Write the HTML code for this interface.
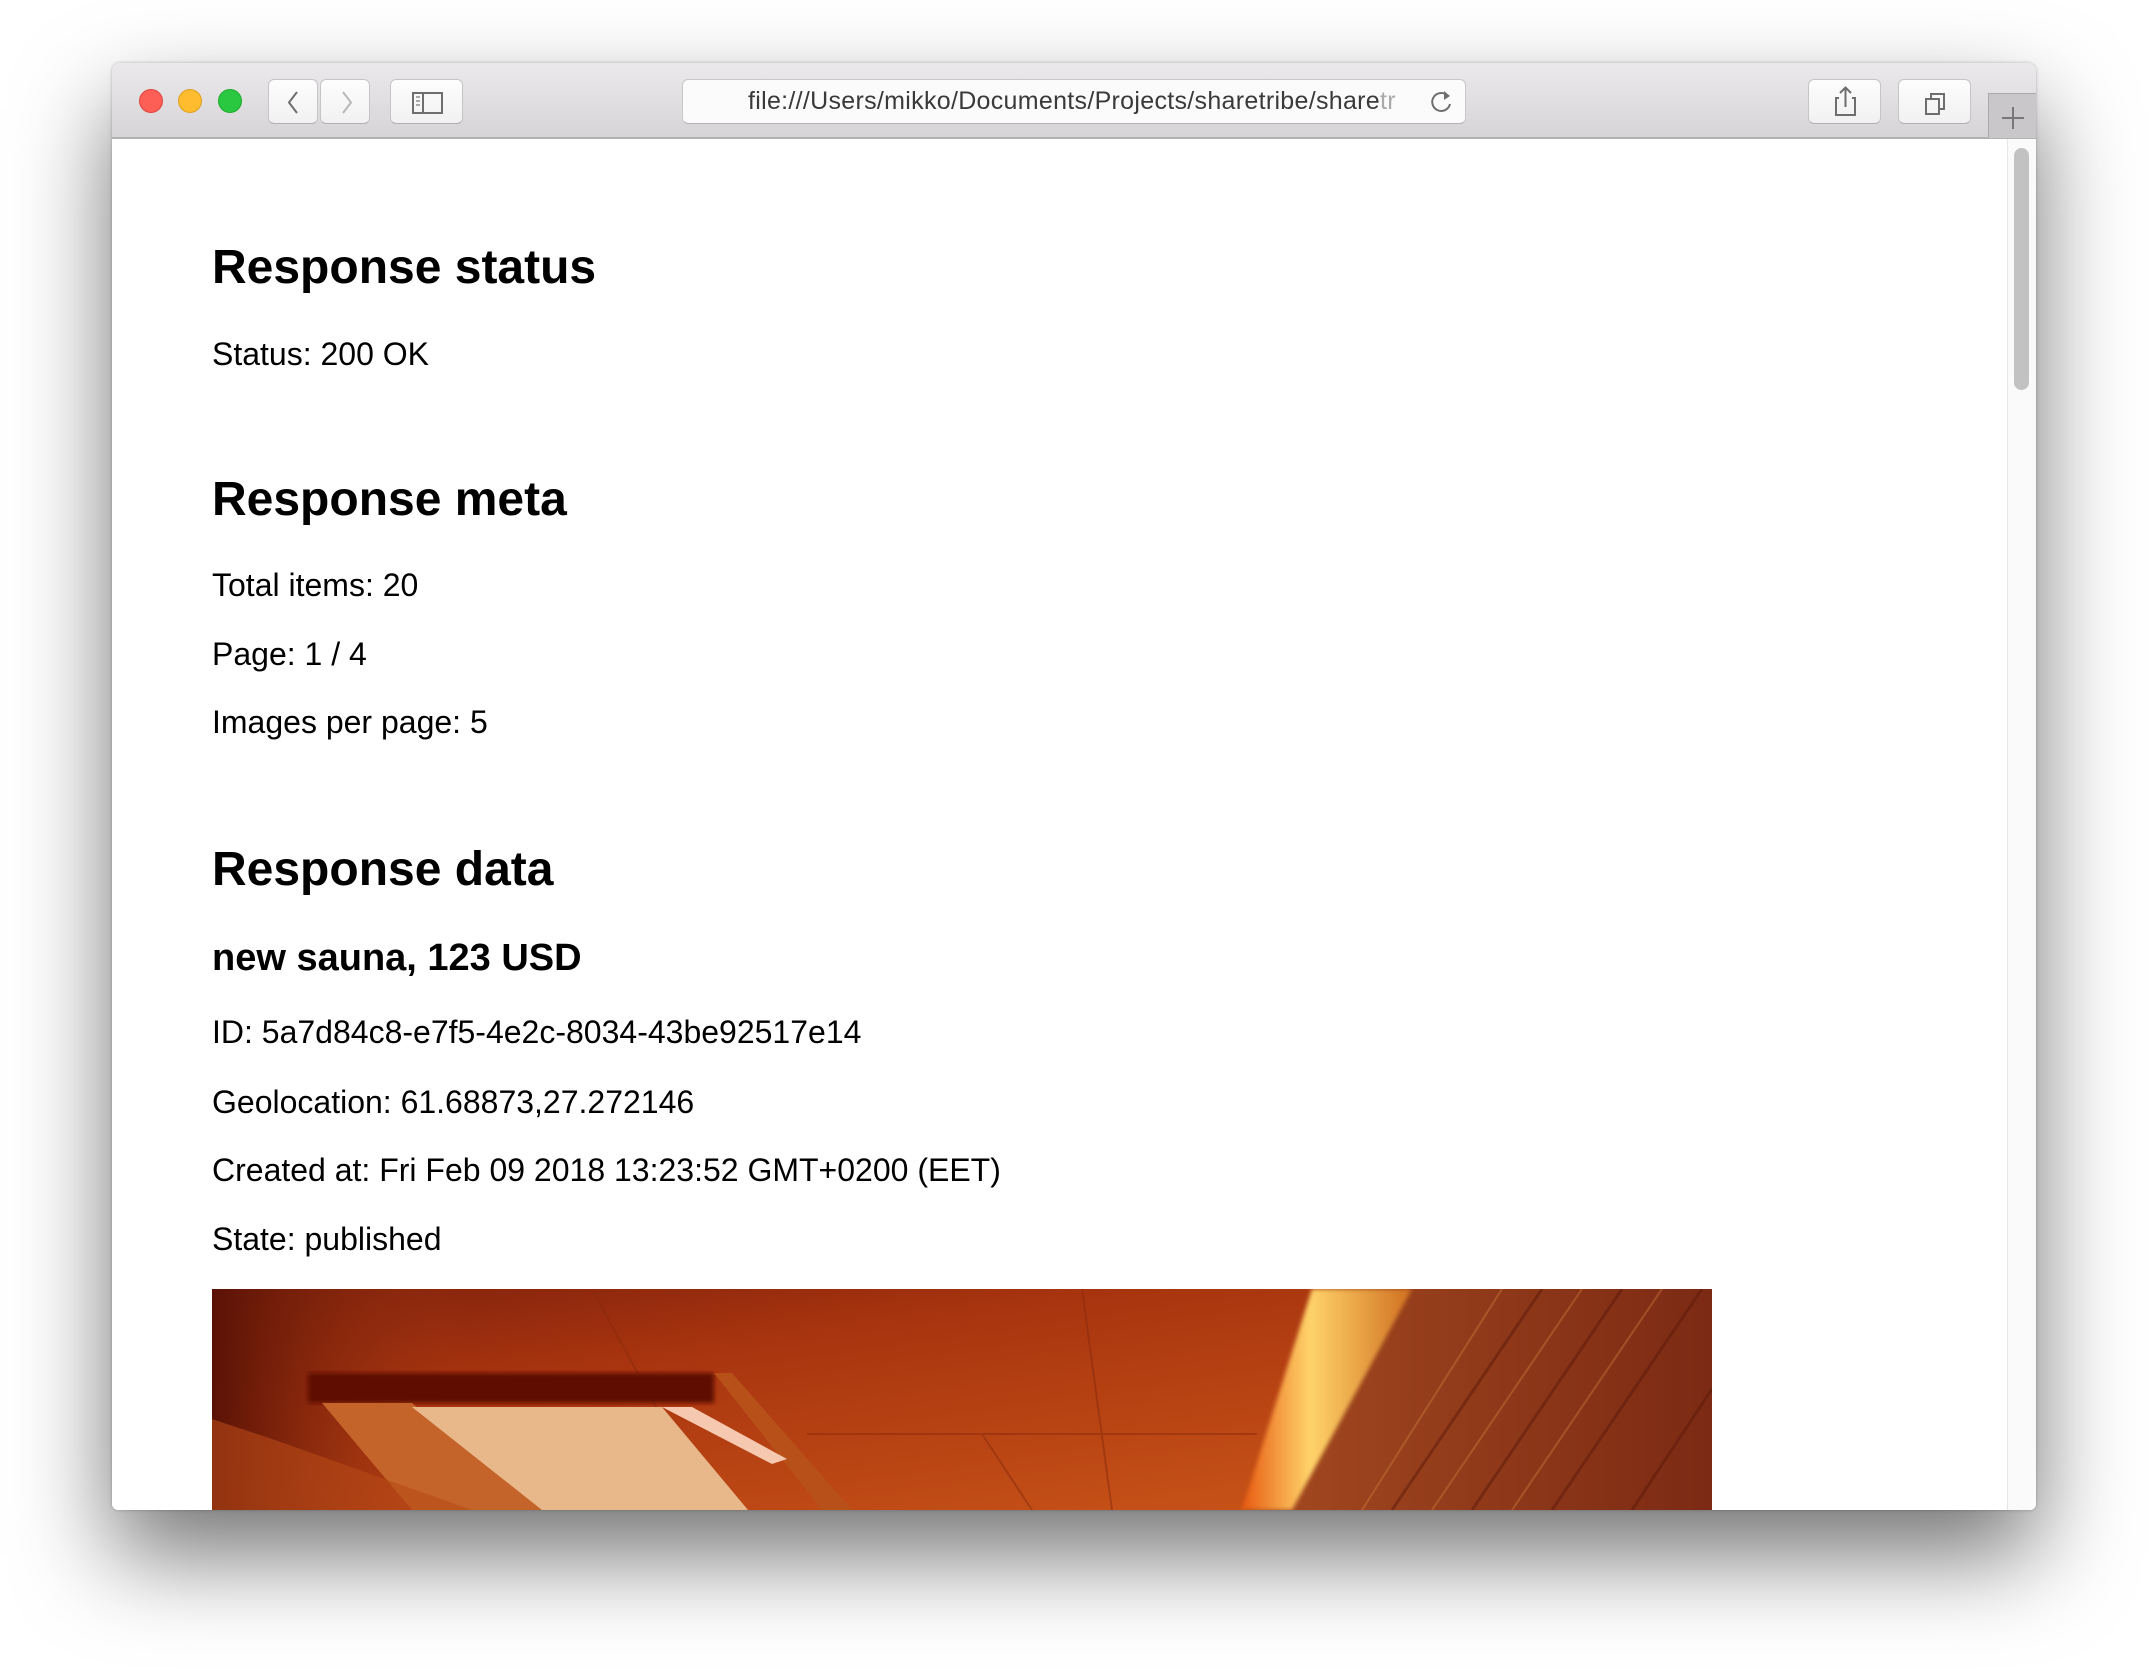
<!DOCTYPE html>
<html><head><meta charset="utf-8"><style>
html,body{margin:0;padding:0;width:2148px;height:1670px;background:#fff;overflow:hidden;font-family:"Liberation Sans",Arial,sans-serif}
.win{position:absolute;left:112px;top:63px;width:1924px;height:1447px;background:#fff;border-radius:8px 8px 6px 6px;box-shadow:0 45px 95px rgba(0,0,0,0.55),0 0 3px rgba(0,0,0,0.25);overflow:hidden}
.tb{position:absolute;left:0;top:0;width:1924px;height:74px;background:linear-gradient(#ebe9eb,#d6d4d6);border-bottom:2px solid #b3b1b3}
.dot{position:absolute;top:26px;width:24px;height:24px;border-radius:50%}
.btn{position:absolute;top:16px;height:45px;background:linear-gradient(#fdfdfd,#f1f1f1);border:1px solid #c6c4c6;border-bottom-color:#b0aeb0;border-radius:6px;box-sizing:border-box}
.url{position:absolute;left:570px;top:16px;width:784px;height:45px;background:#fbfbfb;border:1px solid #c9c7c9;border-bottom-color:#b4b2b4;border-radius:6px;box-sizing:border-box;font-size:25px;letter-spacing:0.3px;color:#3a3a3a;line-height:43px;padding-left:65px;white-space:nowrap;overflow:hidden}
.t{position:absolute;left:100px;line-height:1;white-space:nowrap;color:#000}
.h1{font-size:48px;font-weight:bold}
.h2{font-size:38px;font-weight:bold}
.p{font-size:32px}
</style></head><body>
<div class="win">
 <div class="tb">
  <div class="dot" style="left:27px;background:#fd5f57;border:1px solid #e0443e;box-sizing:border-box"></div>
  <div class="dot" style="left:66px;background:#febc2e;border:1px solid #dea123;box-sizing:border-box"></div>
  <div class="dot" style="left:106px;background:#2ac840;border:1px solid #1eaa2c;box-sizing:border-box"></div>
  <div class="btn" style="left:156px;width:50px"><svg width="50" height="45"><path d="M28 12 L20 22.5 L28 33" stroke="#6e6e6e" stroke-width="2" fill="none"/></svg></div>
  <div class="btn" style="left:208px;width:50px"><svg width="50" height="45"><path d="M22 12 L30 22.5 L22 33" stroke="#b8b8b8" stroke-width="2" fill="none"/></svg></div>
  <div class="btn" style="left:278px;width:73px"><svg width="73" height="45"><rect x="22" y="13" width="29" height="20" stroke="#6e6e6e" stroke-width="2" fill="none"/><path d="M32 13v20" stroke="#6e6e6e" stroke-width="2"/><path d="M25 17h4M25 21h4M25 25h4" stroke="#8e8e8e" stroke-width="1.5"/></svg></div>
  <div class="url">file:///Users/mikko/Documents/Projects/sharetribe/share<span style="color:#aaa">tr</span>
   <svg style="position:absolute;left:746px;top:8px" width="26" height="28"><path d="M19 8 A9 9 0 1 0 21 16" stroke="#6e6e6e" stroke-width="2" fill="none"/><path d="M15 3 L21 8 L15 12 Z" fill="#6e6e6e"/></svg></div>
  <div class="btn" style="left:1696px;width:73px"><svg width="73" height="45"><path d="M30 18h-3v17h19V18h-3" stroke="#6e6e6e" stroke-width="2" fill="none"/><path d="M36.5 27V8M31 13l5.5-5.5L42 13" stroke="#6e6e6e" stroke-width="2" fill="none"/></svg></div>
  <div class="btn" style="left:1786px;width:73px"><svg width="73" height="45"><rect x="27" y="19" width="13" height="15" stroke="#6e6e6e" stroke-width="2" fill="none"/><path d="M32 19v-5h13v15h-5" stroke="#6e6e6e" stroke-width="2" fill="none"/></svg></div>
  <div style="position:absolute;left:1876px;top:30px;width:48px;height:44px;background:#c9c7c9;border-left:1px solid #aaa;border-top:1px solid #aaa"><svg width="48" height="44"><path d="M24 13v22M13 24h22" stroke="#777" stroke-width="2"/></svg></div>
 </div>
 <div style="position:absolute;left:1895px;top:76px;width:29px;height:1371px;background:#fafafa;border-left:1px solid #e6e6e6"></div>
 <div style="position:absolute;left:1902px;top:85px;width:15px;height:242px;background:#c2c2c2;border-radius:8px"></div>

 <div class="t h1" style="top:181px">Response status</div>
 <div class="t p" style="top:275px">Status: 200 OK</div>
 <div class="t h1" style="top:413px">Response meta</div>
 <div class="t p" style="top:506px">Total items: 20</div>
 <div class="t p" style="top:575px">Page: 1 / 4</div>
 <div class="t p" style="top:643px">Images per page: 5</div>
 <div class="t h1" style="top:783px">Response data</div>
 <div class="t h2" style="top:876px">new sauna, 123 USD</div>
 <div class="t p" style="top:953px">ID: 5a7d84c8-e7f5-4e2c-8034-43be92517e14</div>
 <div class="t p" style="top:1023px">Geolocation: 61.68873,27.272146</div>
 <div class="t p" style="top:1091px">Created at: Fri Feb 09 2018 13:23:52 GMT+0200 (EET)</div>
 <div class="t p" style="top:1160px">State: published</div>

 <svg style="position:absolute;left:100px;top:1226px" width="1500" height="221" viewBox="0 0 1500 221" preserveAspectRatio="none">
  <defs>
   <linearGradient id="c" x1="0" y1="0" x2="1" y2="1"><stop offset="0" stop-color="#7e200c"/><stop offset="0.3" stop-color="#a8340f"/><stop offset="1" stop-color="#cf5a1a"/></linearGradient>
   <linearGradient id="w" x1="0" y1="0" x2="1" y2="0"><stop offset="0" stop-color="#a54a20"/><stop offset="1" stop-color="#7c2a14"/></linearGradient>
   <linearGradient id="s" x1="0" y1="0" x2="1" y2="0"><stop offset="0" stop-color="#e85a10"/><stop offset="0.4" stop-color="#ffd36a"/><stop offset="1" stop-color="#d07020"/></linearGradient>
   <linearGradient id="l" x1="0" y1="0" x2="1" y2="0"><stop offset="0" stop-color="#5a1206"/><stop offset="1" stop-color="#a83a12" stop-opacity="0"/></linearGradient>
   <filter id="b"><feGaussianBlur stdDeviation="2"/></filter>
  </defs>
  <rect width="1500" height="221" fill="url(#c)"/>
  <rect width="260" height="221" fill="url(#l)"/>
  <path d="M380 0 L500 221 M870 0 L900 221 M595 145 L1045 145 M770 145 L820 221" stroke="#8a2a0c" stroke-width="2" opacity="0.5"/>
  <polygon points="96,84 502,84 502,114 96,114" fill="#5e0e04" filter="url(#b)"/>
  <polygon points="502,84 520,84 640,221 610,221" fill="#b8501a"/>
  <polygon points="110,114 200,114 330,221 200,221" fill="#c4642a"/>
  <polygon points="200,118 450,118 536,221 330,221" fill="#e8b88a"/>
  <polygon points="450,118 480,118 575,170 560,175" fill="#f6c8b0"/>
  <polygon points="0,130 60,150 260,221 0,221" fill="#b84a18" opacity="0.6"/>
  <polygon points="1110,0 1500,0 1500,221 1033,221" fill="url(#w)"/>
  <g stroke="#5e1a0a" stroke-width="3" opacity="0.5"><path d="M1180 221 L1330 0 M1260 221 L1410 0 M1340 221 L1490 0 M1420 221 L1500 100"/></g>
  <g stroke="#d08040" stroke-width="2" opacity="0.4"><path d="M1150 221 L1290 0 M1220 221 L1370 0 M1300 221 L1450 0"/></g>
  <polygon points="1100,0 1200,0 1080,221 1030,221" fill="url(#s)" filter="url(#b)"/>
 </svg>
</div>
</body></html>
